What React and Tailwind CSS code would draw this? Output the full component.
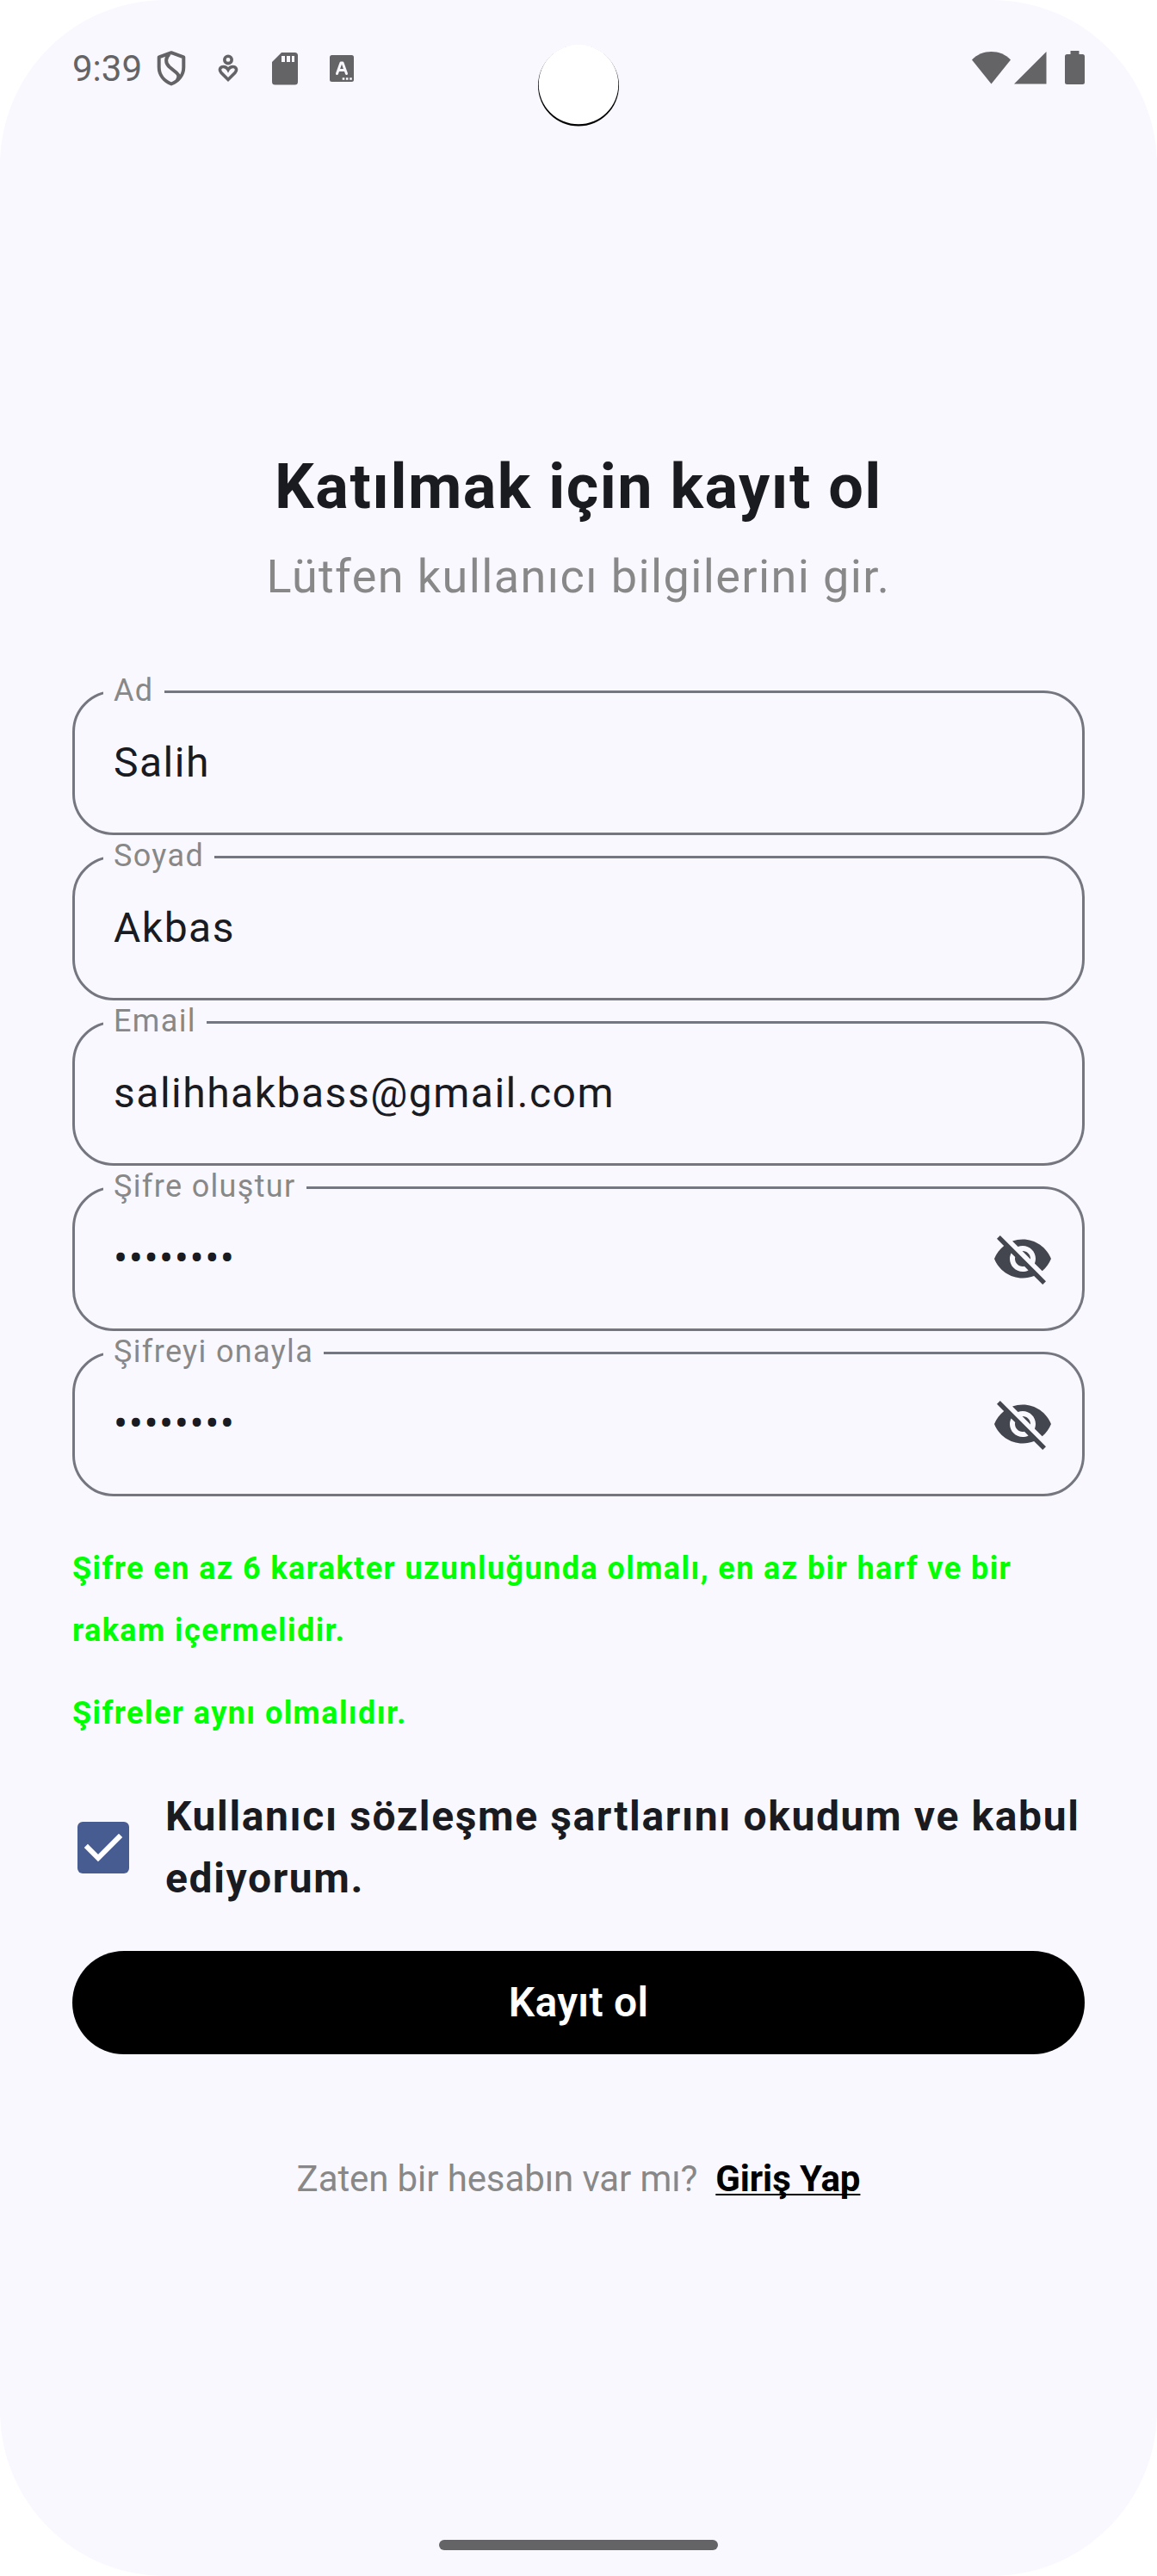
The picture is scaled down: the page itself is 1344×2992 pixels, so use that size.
import React from "react";

const fields = [
  { label: "Ad", value: "Salih" },
  { label: "Soyad", value: "Akbas" },
  { label: "Email", value: "salihhakbass@gmail.com" },
  { label: "Şifre oluştur", value: "••••••••", secret: true },
  { label: "Şifreyi onayla", value: "••••••••", secret: true },
];

function EyeOff() {
  return (
    <svg className="size-[72px] shrink-0 fill-[#44464f]" viewBox="0 0 24 24">
      <path d="M12 7c2.76 0 5 2.24 5 5 0 .65-.13 1.26-.36 1.83l2.92 2.92c1.51-1.26 2.7-2.89 3.43-4.75-1.73-4.39-6-7.5-11-7.5-1.4 0-2.74.25-3.98.7l2.16 2.16C10.74 7.13 11.35 7 12 7zM2 4.27l2.28 2.28.46.46C3.08 8.3 1.78 10.02 1 12c1.73 4.39 6 7.5 11 7.5 1.55 0 3.03-.3 4.38-.84l.42.42L19.73 22 21 20.73 3.27 3 2 4.27zM7.53 9.8l1.55 1.55c-.05.21-.08.43-.08.65 0 1.66 1.34 3 3 3 .22 0 .44-.03.65-.08l1.55 1.55c-.67.33-1.41.53-2.2.53-2.76 0-5-2.24-5-5 0-.79.2-1.53.53-2.2zm4.31-.78l3.15 3.15.02-.16c0-1.66-1.34-3-3-3l-.17.01z" />
    </svg>
  );
}

function Field({ label, value, secret }) {
  return (
    <div className="relative flex h-[168px] items-center justify-between rounded-[48px] border-[3px] border-[#757780] pl-[45px] pr-[33px]">
      <span className="absolute left-[33px] top-[-21px] bg-[#faf8ff] px-3 text-[36px] leading-[36px] tracking-[1.35px] text-[#888888]">
        {label}
      </span>
      <span className="text-[48px] leading-[72px] tracking-[1.5px]">{value}</span>
      {secret && <EyeOff />}
    </div>
  );
}

function StatusBar() {
  return (
    <header className="flex h-[158px] items-start justify-between px-[84px] pt-[58px] text-[#646466]">
      <div className="flex items-start">
        <span className="w-[98px] text-[42px] leading-[44px]">9:39</span>
        <svg className="h-[42px] w-[34px]" viewBox="0 0 34 42" fill="none" stroke="currentColor" strokeWidth="4" strokeLinejoin="round">
          <path d="M17 3.2 31.3 8.4V20C31.3 29 25.500 36 17 39.500 8.500 36 2.700 29 2.700 20V8.400Z" />
          <path d="M14.500 5C10 9.500 10 15 14.500 19.500L23 26.500C26.500 29.500 25.500 33 23.500 35.500" />
        </svg>
        <svg className="ml-[37px] mt-[5px] h-[34px] w-[24px]" viewBox="0 0 24 34" fill="none" stroke="currentColor" strokeWidth="3.600">
          <circle cx="12" cy="6.400" r="4.200" />
          <path d="M12 29.500 3.800 21.200C1 17.800 3 14.500 6.500 14.500 9 14.500 10.800 15.800 12 18 13.200 15.800 15 14.500 17.500 14.500 21 14.500 23 17.800 20.200 21.200Z" />
        </svg>
        <svg className="ml-[39px] mt-[3px] h-[38px] w-[30px]" viewBox="0 0 30 38" fill="currentColor">
          <path fillRule="evenodd" d="M11 0H26.500Q30 0 30 3.500V34Q30 37.500 26.500 37.500H3.500Q0 37.500 0 34V11ZM11 4V11H15V4ZM17 4V11H21V4ZM23 4V11H26V4Z" />
        </svg>
        <svg className="ml-[37px] mt-[6px] h-[31px] w-[28px]" viewBox="0 0 28 31" fill="none">
          <rect width="28" height="31" rx="2.500" fill="currentColor" />
          <path d="M8.500 21.500 13 9H15L19.500 21.500M10.500 17.500H17.500" stroke="#faf8ff" strokeWidth="3" strokeLinecap="round" strokeLinejoin="round" />
          <path d="M14.700 27.500H17.300M18.900 27.500H21.500M23.200 27.500H25.800" stroke="#faf8ff" strokeWidth="2.600" />
        </svg>
      </div>
      <div className="flex items-start">
        <svg className="mt-[1px] h-[39px] w-[45px]" viewBox="0 0 45 39" fill="currentColor">
          <path d="M22.500 38.500 0 10.500C6 4 14 1 22.500 1S39 4 45 10.500Z" />
        </svg>
        <svg className="ml-1 mt-[2px] h-[38px] w-[38px]" viewBox="0 0 38 38" fill="currentColor">
          <path d="M37.500 0V37.500H0Z" />
        </svg>
        <svg className="ml-[21px] mt-[1px] h-[39px] w-[23px]" viewBox="0 0 23 39" fill="currentColor">
          <path d="M6.500 0H16.500V4H20.500Q23 4 23 6.500V36.500Q23 39 20.500 39H2.500Q0 39 0 36.500V6.500Q0 4 2.500 4H6.500Z" />
        </svg>
      </div>
    </header>
  );
}

export default function App() {
  return (
    <div className="h-[2992px] w-[1344px] overflow-hidden bg-white">
      <div className="relative flex h-full flex-col rounded-[192px] bg-[#faf8ff] font-['Roboto',sans-serif] text-[#1a1b21]">
        <StatusBar />
        <svg className="absolute left-[624px] top-[50px] size-[98px]" viewBox="0 0 98 98">
          <circle cx="48" cy="49.500" r="47" fill="#000000" />
          <circle cx="48" cy="48" r="46.300" fill="#ffffff" />
        </svg>

        <main className="flex flex-col px-[84px] pt-[360px]">
          <h1 className="text-center text-[72px] font-bold leading-[96px] tracking-[1.5px]">Katılmak için kayıt ol</h1>
          <p className="mt-5 text-center text-[54px] leading-[72px] tracking-[1.4px] text-[#888888]">
            Lütfen kullanıcı bilgilerini gir.
          </p>

          <div className="mt-24 flex flex-col gap-6">
            {fields.map((f) => (
              <Field key={f.label} {...f} />
            ))}
          </div>

          <div className="mt-12 flex flex-col gap-6 text-[36px] font-bold leading-[72px] tracking-[1.42px] text-[#00ff00]">
            <p>
              Şifre en az 6 karakter uzunluğunda olmalı, en az bir harf ve bir
              <br />
              rakam içermelidir.
            </p>
            <p>Şifreler aynı olmalıdır.</p>
          </div>

          <label className="mt-12 flex items-center gap-[42px] pl-[6px]">
            <svg className="size-[60px] shrink-0" viewBox="0 0 60 60" fill="none">
              <rect width="60" height="60" rx="6" fill="#475d92" />
              <path d="M12 30 24 42 48 18" stroke="#ffffff" strokeWidth="6" strokeLinecap="square" />
            </svg>
            <span className="whitespace-nowrap text-[48px] font-bold leading-[72px] tracking-[1.62px]">
              Kullanıcı sözleşme şartlarını okudum ve kabul
              <br />
              ediyorum.
            </span>
          </label>

          <button className="mt-12 h-[120px] rounded-full bg-black text-[48px] font-semibold leading-[72px] tracking-[0.3px] text-white">
            Kayıt ol
          </button>

          <p className="mt-[115px] flex justify-center gap-[21px] text-[42px] leading-[60px] tracking-[-0.1px] text-[#888888]">
            <span>Zaten bir hesabın var mı?</span>
            <a className="font-bold text-black underline decoration-[2px] underline-offset-[3px] [text-decoration-skip-ink:none]">Giriş Yap</a>
          </p>
        </main>

        <div className="mb-[30px] mt-auto h-3 w-[324px] self-center rounded-full bg-[#646466]" />
      </div>
    </div>
  );
}
